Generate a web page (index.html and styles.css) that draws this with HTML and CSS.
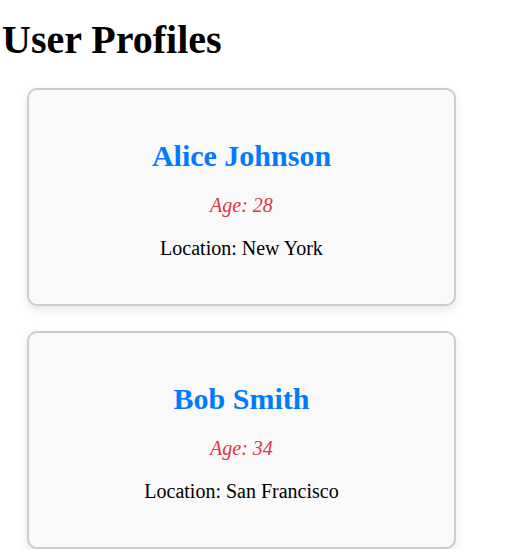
FILE: index.html
```html
<!DOCTYPE html>
<html>
<head>
<meta charset="utf-8">
<title>User Profiles</title>
<link rel="stylesheet" href="styles.css">
</head>
<body>
<h1 class="title">User Profiles</h1>
<div class="list">
  <div class="card">
    <h2 class="name">Alice Johnson</h2>
    <p class="age">Age: 28</p>
    <p class="loc">Location: New York</p>
  </div>
  <div class="card">
    <h2 class="name">Bob Smith</h2>
    <p class="age">Age: 34</p>
    <p class="loc">Location: San Francisco</p>
  </div>
</div>
</body>
</html>
```
FILE: styles.css
```css
html, body {
  margin: 0;
  padding: 0;
  background: #fff;
  font-family: "Liberation Serif", "Times New Roman", serif;
  color: #000;
}
.title {
  font-size: 40px;
  font-weight: bold;
  margin: 16px 0 25px 2px;
  line-height: normal;
}
.list {
  display: flex;
  flex-direction: column;
  gap: 25px;
  padding-left: 27px;
}
.card {
  box-sizing: border-box;
  width: 429px;
  border: 2px solid #cccccc;
  border-radius: 10px;
  background: #f9f9f9;
  box-shadow: 0 4px 10px rgba(0, 0, 0, 0.1);
  padding: 25px;
  text-align: center;
}
.name {
  font-size: 30px;
  font-weight: bold;
  color: #007bff;
  margin: 24px 0 21px;
}
.age {
  font-size: 20px;
  font-style: italic;
  color: #dc3545;
  margin: 0 0 20px;
}
.loc {
  font-size: 20px;
  margin: 0 0 19px;
}
```
